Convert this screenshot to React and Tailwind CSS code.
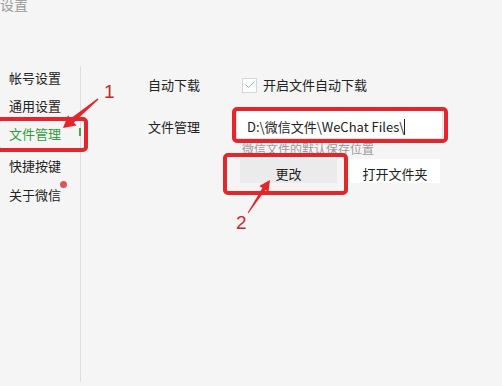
import { Check } from 'lucide-react';

const items = ['帐号设置', '通用设置', '文件管理', '快捷按键', '关于微信'];

const App = () => {
  return (
    <div className="relative w-[502px] h-[386px] overflow-hidden bg-[#f5f5f5] font-['Noto_Sans_CJK_SC',sans-serif] text-[13px] text-[#222]">
      {/* Title */}
      <div className="h-[64px]">
        <span className="block -mt-[4px] text-[14px] leading-[16px] text-[#9a9a9a]">设置</span>
      </div>

      <div className="flex h-[322px]">
        {/* Sidebar */}
        <div className="w-[80px] flex flex-col pl-[9px] pt-[4px]">
          {items.map((t, i) => (
            <div
              key={t}
              className={`h-7 flex items-center relative ${i === 3 ? 'mt-[4px]' : ''} ${i === 4 ? 'mt-[1px]' : ''} ${i === 2 ? 'text-[#2f9e3a]' : ''}`}
            >
              {t}
              {i === 4 && <span className="absolute left-[51px] top-0 w-[7px] h-[7px] rounded-full bg-[#e0555b]" />}
            </div>
          ))}
        </div>

        {/* Divider */}
        <div className="relative w-px mt-[6px] bg-[#dedede]">
          <span className="absolute left-[-1px] top-[62px] w-[2px] h-[8px] bg-[#3cb043]" />
        </div>

        {/* Main */}
        <div className="flex flex-col pl-[67px] pt-[13px]">
          <div className="flex items-center h-6">
            <div className="w-[88px]">自动下载</div>
            <div className="ml-[6px] w-[15px] h-[15px] bg-white border border-[#d6d6d6] flex items-center justify-center">
              <Check size={12} strokeWidth={2} className="text-[#7cc48a]" />
            </div>
            <span className="ml-[6px]">开启文件自动下载</span>
          </div>

          <div className="flex items-center mt-[12px] h-[30px]">
            <div className="w-[88px] pt-[6px]">文件管理</div>
            <div className="w-[207px] h-[30px] bg-white border border-[#e2e2e2] flex items-center pl-[10px] pt-[6px]">
              <span>D:\微信文件\WeChat Files\</span>
              <span className="w-px h-[16px] bg-[#222]" />
            </div>
          </div>

          <div className="ml-[94px] mt-[3px] text-[12px] leading-[14px] text-[#9a9a9a]">微信文件的默认保存位置</div>

          <div className="flex items-center ml-[92px] mt-[3px] gap-[13px]">
            <button className="w-[97px] h-6 pt-[5px] bg-[#ebebeb] text-[13px] flex items-center justify-center">更改</button>
            <button className="w-[90px] h-6 pt-[5px] bg-white text-[13px] flex items-center justify-center">打开文件夹</button>
          </div>
        </div>
      </div>

      {/* Annotations */}
      <div className="absolute left-[-4px] top-[117px] w-[92px] h-[35px] border-[4px] border-[#e3262c] rounded-[5px]" />
      <div className="absolute left-[232px] top-[107px] w-[216px] h-[36px] border-[4px] border-[#e3262c] rounded-[5px]" />
      <div className="absolute left-[223px] top-[153px] w-[125px] h-[42px] border-[4px] border-[#e3262c] rounded-[5px]" />

      <svg className="absolute left-0 top-0" width="502" height="386">
        <polygon
          points="98.5,99.6 73.8,122.4 76.5,125.5 63,128 68,115.3 70.6,118.5 97.5,98.4"
          fill="#e3262c"
        />
        <polygon
          points="248.4,213.3 265.4,190.1 268.5,192.1 270,180 259.3,186.1 262.4,188.1 247.6,212.7"
          fill="#e3262c"
        />
      </svg>
      <span className="absolute left-[104px] top-[82px] text-[19px] leading-[20px] text-[#c9272e] font-['Liberation_Sans',sans-serif]">1</span>
      <span className="absolute left-[236px] top-[213px] text-[19px] leading-[20px] text-[#c9272e] font-['Liberation_Sans',sans-serif]">2</span>
    </div>
  );
};

export default App;
